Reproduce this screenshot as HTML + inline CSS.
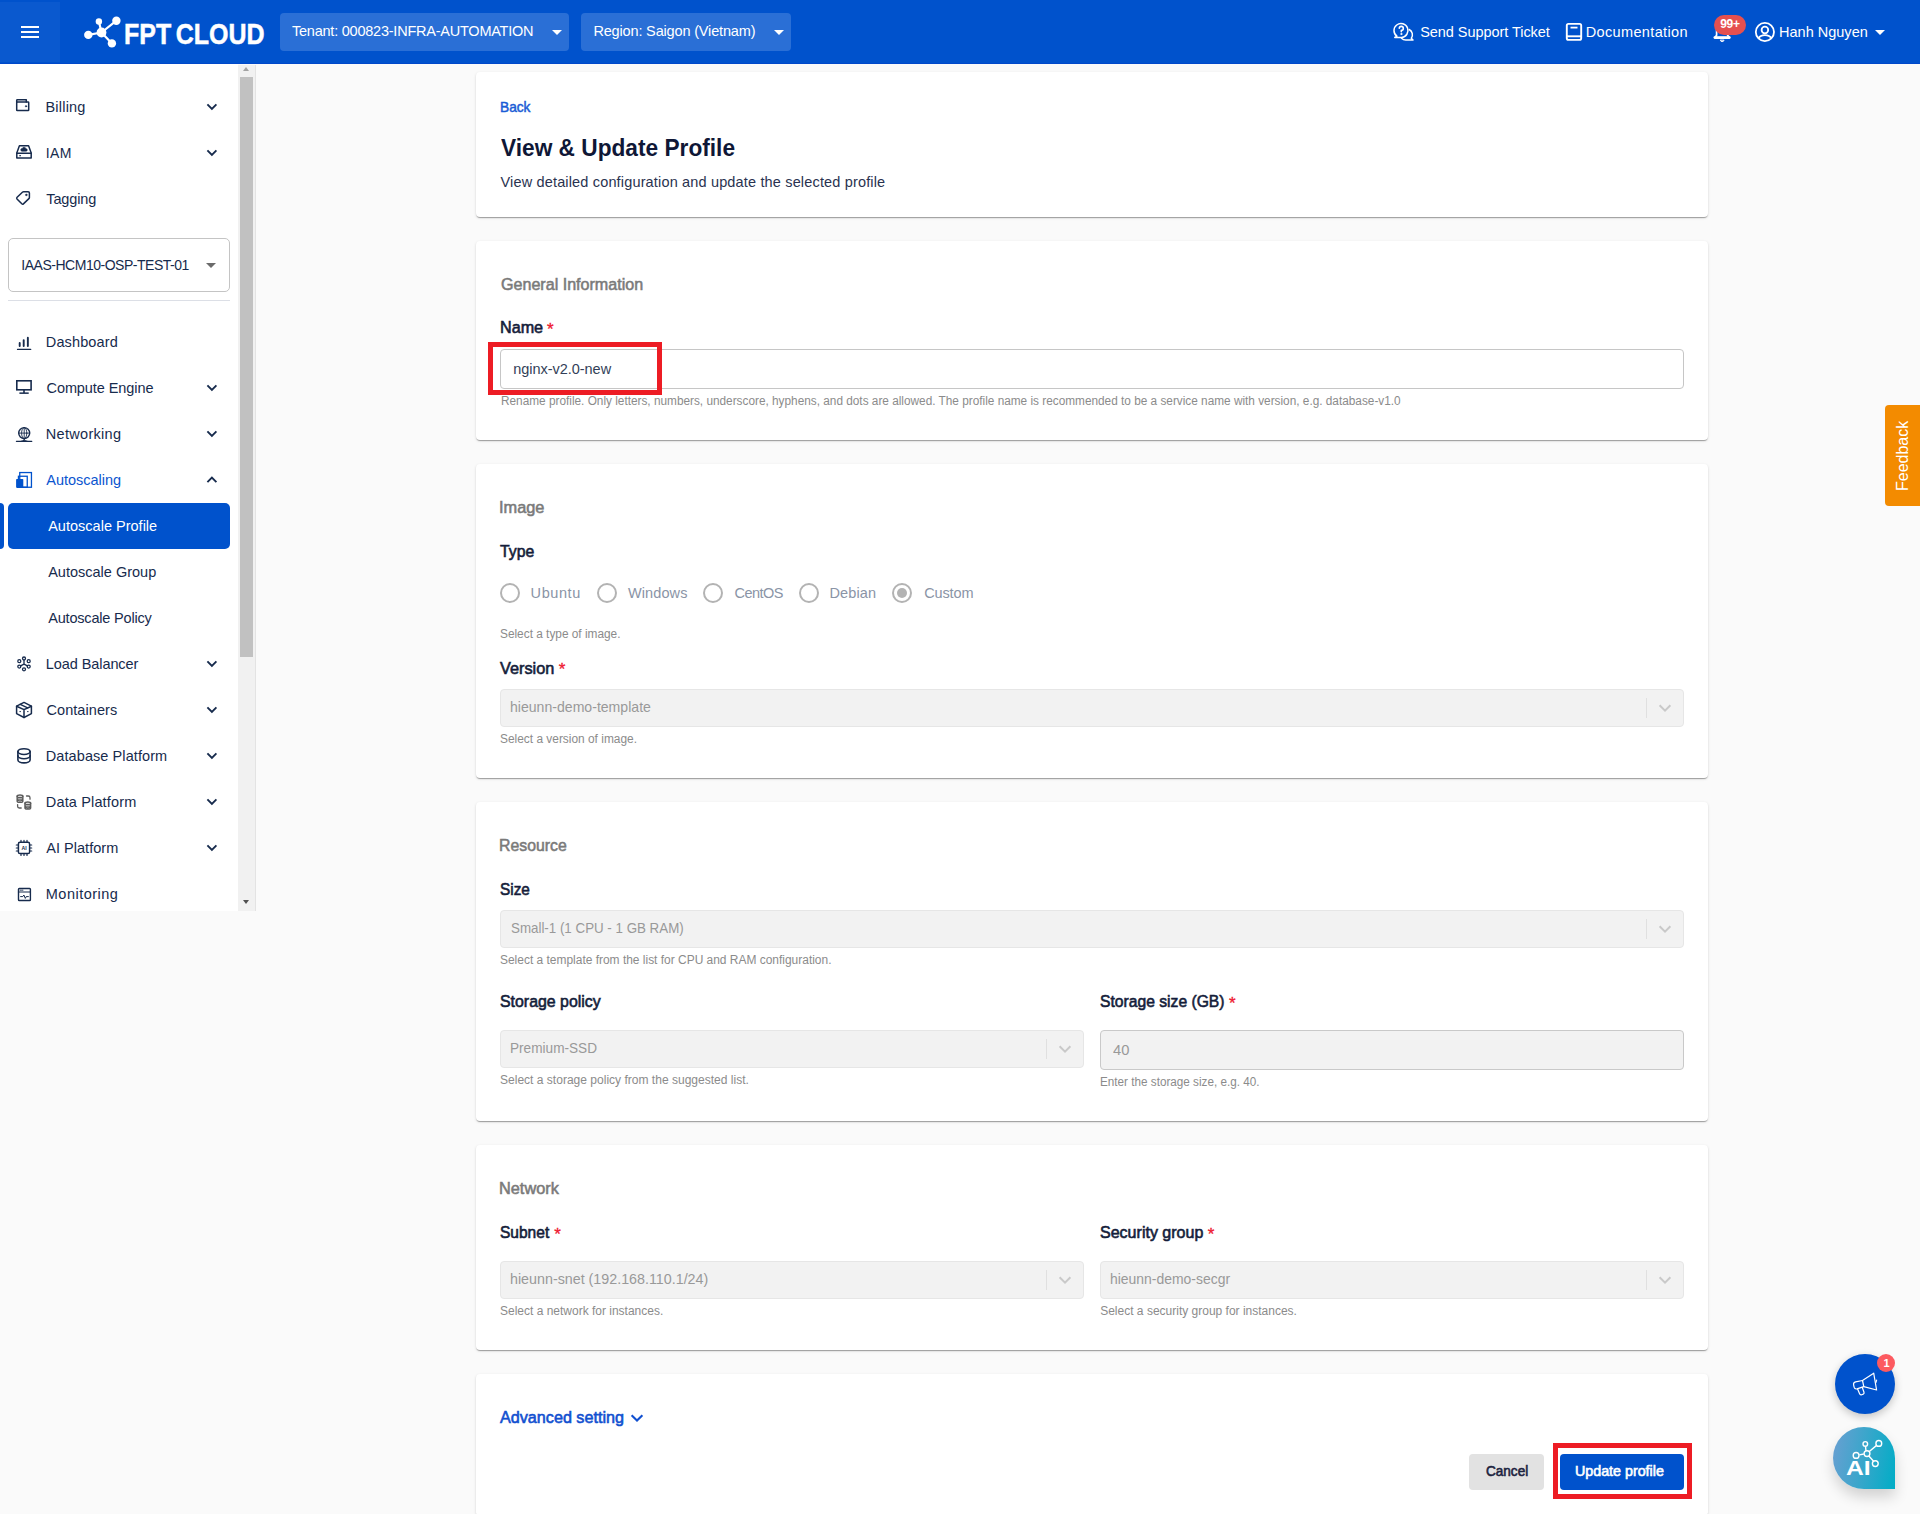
<!DOCTYPE html>
<html lang="en"><head>
<meta charset="utf-8">
<title>View &amp; Update Profile - FPT Cloud</title>
<style>
*{box-sizing:border-box;margin:0;padding:0}
html,body{width:1920px;height:1514px;overflow:hidden}
body{position:relative;background:#fafafa;font-family:"Liberation Sans",sans-serif;color:#172b4d}
.t{position:absolute;white-space:nowrap;line-height:1;display:block}
svg{position:absolute;overflow:visible}
/* header */
#hdr{position:absolute;left:0;top:0;width:1920px;height:64px;background:#0052cc;color:#fff;box-shadow:inset 0 -1px 0 #0048ca}
#burger{position:absolute;left:0;top:2px;width:60px;height:60px;background:#0a59cf}
#burger i{position:absolute;left:21px;width:18px;height:2px;background:#fff}
.hsel{position:absolute;top:13px;height:38px;background:#2a6fd6;border-radius:4px}
.ht{font-size:14.5px;color:#fff}
.caret{position:absolute;width:0;height:0;border-left:5px solid transparent;border-right:5px solid transparent;border-top:5px solid #fff}
#logo{font-size:30px;font-weight:bold;color:#fff;word-spacing:-3px;-webkit-text-stroke:0.5px #fff}
#badge{position:absolute;left:1714px;top:15px;width:32px;height:20px;border-radius:10px;background:#e5504f}
#badge .t{font-size:12px;font-weight:bold;color:#fff}
/* sidebar */
#side{position:absolute;left:0;top:64px;width:238px;height:847px;background:#fff}
#sbar{position:absolute;left:238px;top:65px;width:18px;height:846px;background:#f1f1f1;border-right:1px solid #e3e3e3}
#sbar .thumb{position:absolute;left:2px;top:12px;width:13px;height:580px;background:#c1c1c1}
#sbar .up,#sbar .dn{position:absolute;left:5px;width:0;height:0;border-left:3.5px solid transparent;border-right:3.5px solid transparent}
#sbar .up{top:2px;border-bottom:4px solid #a3a3a3}
#sbar .dn{bottom:7px;border-top:4px solid #505050}
.nl{font-size:14.5px;color:#172b4d}
#navsvg{fill:none;stroke:#172b4d;stroke-width:1.5;stroke-linecap:round;stroke-linejoin:round}
#navsvg .chev{stroke-width:1.9;stroke-linecap:butt;stroke-linejoin:miter}
#proj{position:absolute;left:8px;top:174px;width:222px;height:54px;border:1px solid #c4c4c4;border-radius:5px;background:#fff}
#projcaret{position:absolute;left:206px;top:199px;width:0;height:0;border-left:5px solid transparent;border-right:5px solid transparent;border-top:5px solid #6b6b6b}
#sdiv{position:absolute;left:8px;top:236px;width:222px;height:1px;background:#dcdfe6}
#act{position:absolute;left:8px;top:439px;width:222px;height:46px;background:#0052cc;border-radius:5px}
#actbar{position:absolute;left:0;top:439px;width:4px;height:46px;background:#0052cc;border-radius:0 4px 4px 0}

/* cards */
.card{position:absolute;left:476px;width:1232px;background:#fff;border-radius:4px;box-shadow:0 2px 1px -1px rgba(0,0,0,.2),0 1px 1px 0 rgba(0,0,0,.14),0 1px 3px 0 rgba(0,0,0,.12)}
.sec{font-size:16.4px;color:#7a7a7a;-webkit-text-stroke:0.55px #7a7a7a}
.lab{font-size:16.4px;color:#141d3a;-webkit-text-stroke:0.6px #141d3a}
.req{font-size:17px;color:#ee1830;-webkit-text-stroke:0.3px #ee1830}
.help{font-size:12px;color:#8b8b8b}
.dis{position:absolute;background:#f2f2f2;border:1px solid #e6e6e6;border-radius:4px}
.dis i{position:absolute;right:36px;top:8px;width:1px;height:20px;background:#e0e0e0}
.val{font-size:14.5px;color:#999}
.rad{position:absolute;width:20px;height:20px;border:2px solid #b3b3b3;border-radius:50%;background:#fff}
.rad.on::after{content:"";position:absolute;left:3px;top:3px;width:10px;height:10px;border-radius:50%;background:#b3b3b3}
.rl{font-size:14.5px;color:#8a94a6}
.mark{position:absolute;border:5px solid #ed1c24}
.btn{position:absolute;top:1454px;height:36px;border-radius:4px}
.bt{font-size:14.5px;-webkit-text-stroke:0.6px}
</style>
</head>
<body>

<!-- ================= HEADER ================= -->
<header id="hdr">
  <div id="burger"><i style="top:24px"></i><i style="top:29px"></i><i style="top:34px"></i></div>
  <svg id="logoicon" style="left:80px;top:12px" width="44" height="40" viewBox="80 12 44 40">
    <g stroke="#fff" stroke-width="2.2" stroke-linecap="round">
      <line x1="101.5" y1="32.5" x2="98.9" y2="21.5"></line><line x1="101.5" y1="32.5" x2="116.4" y2="20.7"></line>
      <line x1="101.5" y1="32.5" x2="88.3" y2="34.9"></line><line x1="101.5" y1="32.5" x2="111.9" y2="43.4"></line>
    </g>
    <g fill="#fff"><circle cx="101.5" cy="32.5" r="4.9"></circle><circle cx="98.9" cy="21.5" r="3.2"></circle><circle cx="116.4" cy="20.7" r="4.2"></circle><circle cx="88.3" cy="34.9" r="4.2"></circle><circle cx="111.9" cy="43.4" r="4.2"></circle></g>
  </svg>
  <span class="t" id="logo" style="left: 124.03px; top: 18.9px; transform-origin: 0px 0px; transform: scaleX(0.833);">FPT CLOUD</span>

  <div class="hsel" style="left:280px;width:289px"></div>
  <span class="t ht" style="letter-spacing: -0.23px; left: 292px; top: 24px;">Tenant: 000823-INFRA-AUTOMATION</span>
  <div class="caret" style="left:552px;top:30px"></div>
  <div class="hsel" style="left:581px;width:210px"></div>
  <span class="t ht" style="letter-spacing: -0.16px; left: 593.4px; top: 24px;">Region: Saigon (Vietnam)</span>
  <div class="caret" style="left:774px;top:30px"></div>

  <!-- support -->
  <svg style="left:1392px;top:21px" width="24" height="22" viewBox="1392 21 24 22" fill="none" stroke="#fff" stroke-width="1.5" stroke-linejoin="round" stroke-linecap="round">
    <path d="M1396.9 36.2 A7 7 0 1 1 1401.5 37.5 L1394.8 37.5 Z"></path>
    <path d="M1409.2 29.5 A6 6 0 0 1 1411.3 38.3 L1413 40 L1405.8 40 A6 6 0 0 1 1401.5 38.2"></path>
    <path d="M1399.3 28.3 A2 2 0 1 1 1401.3 30.4 L1401.3 31.7" stroke-width="1.6"></path>
    <circle cx="1401.3" cy="34" r="0.6" fill="#fff" stroke-width="0.9"></circle>
  </svg>
  <span class="t ht" style="letter-spacing: -0.05px; left: 1420.2px; top: 24.7px;">Send Support Ticket</span>
  <!-- doc -->
  <svg style="left:1565px;top:22px" width="18" height="20" viewBox="1565 22 18 20" fill="none" stroke="#fff" stroke-width="1.9" stroke-linejoin="round">
    <rect x="1566.8" y="23.9" width="14.4" height="16" rx="1.6"></rect>
    <line x1="1567" y1="36.3" x2="1581" y2="36.3"></line>
    <line x1="1570.5" y1="27.6" x2="1577.5" y2="27.6" stroke-width="1.8"></line>
  </svg>
  <span class="t ht" style="letter-spacing: 0.36px; left: 1585.7px; top: 24.7px;">Documentation</span>
  <!-- bell -->
  <svg style="left:1712px;top:20px" width="20" height="23" viewBox="1712 20 20 23" fill="none" stroke="#fff" stroke-width="1.7" stroke-linejoin="round" stroke-linecap="round">
    <path d="M1714.8 37.6 L1729.4 37.6 L1727.6 35.2 L1727.6 30 A5.5 5.5 0 0 0 1716.6 30 L1716.6 35.2 Z" fill="none"></path><path d="M1714.8 37.6 H1729.4" stroke-width="2.6"></path>
    <path d="M1720.3 40.4 A2 2 0 0 0 1724 40.4 Z" fill="#fff" stroke-width="0.8"></path>
  </svg>
  <div id="badge"></div>
  <span class="t" style="font-size: 12px; font-weight: bold; color: rgb(255, 255, 255); letter-spacing: -0.37px; left: 1720.3px; top: 18.4px;">99+</span>
  <!-- user -->
  <svg style="left:1754px;top:21px" width="22" height="22" viewBox="1754 21 22 22" fill="none" stroke="#fff" stroke-width="1.8">
    <circle cx="1764.9" cy="32" r="9.1"></circle>
    <circle cx="1764.9" cy="30" r="3.3"></circle>
    <path d="M1758.6 38.3 A6.6 4.4 0 0 1 1771.2 38.3"></path>
  </svg>
  <span class="t ht" style="letter-spacing: 0.01px; left: 1779px; top: 24.8px;">Hanh Nguyen</span>
  <div class="caret" style="left:1875px;top:30px"></div>
</header>

<!-- ================= SIDEBAR ================= -->
<nav>
<div id="side">
  <div id="proj"></div>
  <div id="projcaret"></div>
  <div id="sdiv"></div>
  <div id="act"></div><div id="actbar"></div>
</div>

<svg id="navsvg" style="left:0;top:64px" width="238" height="847" viewBox="0 64 238 847">
  <!-- billing / wallet -->
  <g><rect x="16.7" y="101.9" width="12" height="8.6" rx="0.6"></rect><path d="M16.7 102 V100.4 Q16.7 99.7 17.4 99.7 H26.3 V101.9"></path><circle cx="26" cy="106.3" r="0.7" fill="#172b4d" stroke-width="0.6"></circle></g>
  <!-- iam / drive -->
  <g><path d="M19.4 145.8 H28.6 L31.2 152.9 V158 H16.8 V152.9 Z"></path><path d="M16.8 153.3 H31.2"></path><path d="M21.6 151.2 a1.4 1.4 0 0 1 0.6 -2.7 a2 2 0 0 1 3.8 0.3 a1.2 1.2 0 0 1 0.2 2.4 Z" fill="#172b4d" stroke-width="0.5"></path><circle cx="20" cy="155.7" r="0.5" fill="#172b4d" stroke-width="0.5"></circle></g>
  <!-- tag -->
  <g><path d="M23.6 191.7 H28.2 Q29.4 191.7 29.4 192.9 V197.4 Q29.4 198.1 28.9 198.6 L23.4 203.9 Q22.6 204.6 21.8 203.8 L17 198.9 Q16.3 198.1 17.1 197.3 L22.4 192.2 Q22.9 191.7 23.6 191.7 Z"></path><circle cx="26.3" cy="194.9" r="0.8" fill="#172b4d" stroke-width="0.6"></circle></g>
  <!-- dashboard -->
  <g stroke-linecap="round"><path d="M19.7 343 V346.1 M23.7 340.1 V346.1 M27.85 337.7 V346.1" stroke-width="1.9"></path><path d="M17.5 349.4 H30.7" stroke-width="1.25"></path></g>
  <!-- compute / monitor -->
  <g stroke-linejoin="miter" stroke-linecap="butt"><rect x="16.8" y="380.8" width="14.3" height="9" stroke-width="1.6"></rect><path d="M24 390 V393" stroke-width="1.6"></path><path d="M19.4 393.15 H28.7" stroke-width="1.5"></path></g>
  <!-- networking / globe -->
  <g stroke-width="1.4"><circle cx="24.2" cy="433.1" r="5.5"></circle><ellipse cx="24.2" cy="433.1" rx="2.6" ry="5.5" stroke-width="0.9"></ellipse><path d="M18.7 433.1 H29.7 M24.2 427.6 V438.6" stroke-width="0.9"></path><path d="M16.4 441.3 H31.8" stroke-width="1.2"></path><path d="M24.2 438.6 V439.6 M21.2 441.3 Q24.2 441 24.2 439.2 Q24.2 441 27.2 441.3" stroke-width="1.1"></path></g>
  <!-- autoscaling -->
  <g stroke="#0052cc" stroke-linejoin="miter"><rect x="19.75" y="472.55" width="11.7" height="14.7" stroke-width="1.3"></rect><rect x="18.45" y="476.25" width="8.8" height="11" stroke-width="1.3"></rect><rect x="16.1" y="479" width="7.2" height="8.9" rx="0.8" fill="#0052cc" stroke="none"></rect></g>
  <!-- load balancer -->
  <g stroke-width="1.3"><circle cx="24" cy="658.5" r="1.5"></circle><circle cx="19.3" cy="661.2" r="1.5"></circle><circle cx="28.7" cy="661.2" r="1.5"></circle><circle cx="19.3" cy="666.6" r="1.5"></circle><circle cx="28.7" cy="666.6" r="1.5"></circle><circle cx="24" cy="669.3" r="1.5"></circle><path d="M24 660 V664.2 L20.6 665.9 M24 664.2 L27.4 665.9"></path></g>
  <!-- containers / box -->
  <g stroke-width="1.5"><path d="M24 702.4 L31.4 706.2 V713.6 L24 717.5 L16.6 713.6 V706.2 Z"></path><path d="M16.6 706.2 L24 709.6 L31.4 706.2 M24 709.6 V717.5"></path><path d="M20.2 704.3 L27.7 707.9" stroke-width="1.3"></path><path d="M19.8 711.6 h0.8 M27.4 711.6 h0.8" stroke-width="0.9"></path></g>
  <!-- database -->
  <g stroke-width="1.6"><ellipse cx="24" cy="751.6" rx="6.1" ry="2.9"></ellipse><path d="M17.9 751.6 V760 A6.1 2.9 0 0 0 30.1 760 V751.6"></path><path d="M17.9 755.8 A6.1 2.9 0 0 0 30.1 755.8"></path></g>
  <!-- data platform -->
  <g stroke="#5c5c5c" stroke-width="1.3"><ellipse cx="20" cy="796.2" rx="2.9" ry="1.2"></ellipse><path d="M17.1 796.2 V801.2 A2.9 1.2 0 0 0 22.9 801.2 V796.2 M17.1 798 A2.9 1.2 0 0 0 22.9 798 M17.1 799.6 A2.9 1.2 0 0 0 22.9 799.6"></path><ellipse cx="27.8" cy="803.2" rx="2.9" ry="1.2"></ellipse><path d="M24.9 803.2 V808 A2.9 1.2 0 0 0 30.7 808 V803.2 M24.9 805 A2.9 1.2 0 0 0 30.7 805 M24.9 806.6 A2.9 1.2 0 0 0 30.7 806.6"></path><path d="M26.5 796 H28.3 Q30 796 30 797.7 V799.2"></path><path d="M17.6 804.6 V806.3 Q17.6 808 19.3 808 H21.2"></path></g>
  <!-- ai platform / chip -->
  <g stroke-width="1.5"><rect x="18.4" y="842.3" width="11.2" height="11.2" rx="1.6"></rect><path d="M21 840.3 V842 M24 840.3 V842 M27 840.3 V842 M21 853.8 V855.5 M24 853.8 V855.5 M27 853.8 V855.5 M16.3 845 H18 M16.3 848 H18 M16.3 851 H18 M30 845 H31.7 M30 848 H31.7 M30 851 H31.7" stroke-width="1.2"></path></g>
  <text x="24" y="849.9" text-anchor="middle" font-family="Liberation Sans, sans-serif" font-size="5.2" font-weight="bold" fill="#172b4d" stroke="none">AI</text>
  <!-- monitoring -->
  <g stroke-width="1.4"><rect x="18.5" y="888.5" width="11.9" height="12" rx="0.8"></rect><path d="M18.5 892 H30.4" stroke-width="1.2"></path><path d="M20 890.2 h3" stroke-width="0.8" stroke-dasharray="0.6 0.6"></path><path d="M20.6 896.6 H22.8 L23.9 895 L25.3 898.4 L26.2 896.6 H28.4" stroke-width="1"></path></g>
  <!-- chevrons -->
  <polyline class="chev" points="207.4,104.4 211.9,108.9 216.4,104.4"></polyline><polyline class="chev" points="207.4,150.4 211.9,154.9 216.4,150.4"></polyline><polyline class="chev" points="207.4,385.4 211.9,389.9 216.4,385.4"></polyline><polyline class="chev" points="207.4,431.4 211.9,435.9 216.4,431.4"></polyline><polyline class="chev" points="207.4,482.1 211.9,477.6 216.4,482.1"></polyline><polyline class="chev" points="207.4,661.4 211.9,665.9 216.4,661.4"></polyline><polyline class="chev" points="207.4,707.4 211.9,711.9 216.4,707.4"></polyline><polyline class="chev" points="207.4,753.4 211.9,757.9 216.4,753.4"></polyline><polyline class="chev" points="207.4,799.4 211.9,803.9 216.4,799.4"></polyline><polyline class="chev" points="207.4,845.4 211.9,849.9 216.4,845.4"></polyline>
</svg>
<div id="sbar"><div class="up"></div><div class="thumb"></div><div class="dn"></div></div>

<span class="t nl" style="letter-spacing: 0.2px; left: 45.5px; top: 100px;">Billing</span>
<span class="t nl" style="font-size: 14px; letter-spacing: 0.34px; left: 45.8px; top: 146px;">IAM</span>
<span class="t nl" style="letter-spacing: -0.14px; left: 46.3px; top: 192px;">Tagging</span>
<span class="t nl" style="font-size: 14px; letter-spacing: -0.48px; left: 21.3px; top: 258px;">IAAS-HCM10-OSP-TEST-01</span>
<span class="t nl" style="letter-spacing: 0.13px; left: 45.8px; top: 335px;">Dashboard</span>
<span class="t nl" style="letter-spacing: -0.08px; left: 46.5px; top: 381px;">Compute Engine</span>
<span class="t nl" style="letter-spacing: 0.3px; left: 45.8px; top: 427px;">Networking</span>
<span class="t nl" style="color: rgb(11, 85, 207); letter-spacing: -0.02px; left: 46.3px; top: 473px;">Autoscaling</span>
<span class="t nl" style="color: rgb(255, 255, 255); letter-spacing: 0.01px; left: 48.2px; top: 519px;">Autoscale Profile</span>
<span class="t nl" style="letter-spacing: 0px; left: 48.2px; top: 565px;">Autoscale Group</span>
<span class="t nl" style="letter-spacing: -0.18px; left: 48.2px; top: 611px;">Autoscale Policy</span>
<span class="t nl" style="letter-spacing: -0.08px; left: 45.8px; top: 657px;">Load Balancer</span>
<span class="t nl" style="letter-spacing: 0.06px; left: 46.5px; top: 703px;">Containers</span>
<span class="t nl" style="letter-spacing: 0.08px; left: 45.8px; top: 749px;">Database Platform</span>
<span class="t nl" style="letter-spacing: 0.15px; left: 45.8px; top: 795px;">Data Platform</span>
<span class="t nl" style="letter-spacing: 0.02px; left: 46.3px; top: 841px;">AI Platform</span>
<span class="t nl" style="letter-spacing: 0.48px; left: 45.8px; top: 887px;">Monitoring</span>


</nav>
<!-- ================= MAIN ================= -->
<main>
<div class="card" style="top:72px;height:144.6px"></div>
<span class="t" style="font-size: 14.5px; color: rgb(26, 92, 214); -webkit-text-stroke: 0.5px rgb(26, 92, 214); left: 499.56px; top: 100.2px; transform-origin: 0px 0px; transform: scaleX(0.944);">Back</span>
<span class="t ttl" style="font-size: 24px; font-weight: bold; color: rgb(15, 23, 54); left: 500.5px; top: 135.8px; transform-origin: 0px 0px; transform: scaleX(0.945);">View &amp; Update Profile</span>
<span class="t" style="font-size: 14.5px; color: rgb(42, 51, 80); letter-spacing: 0.16px; left: 500.5px; top: 175px;">View detailed configuration and update the selected profile</span>

<div class="card" style="top:241px;height:198.6px"></div>
<span class="t sec" style="left: 500.5px; top: 276px; transform-origin: 0px 0px; transform: scaleX(0.981);">General Information</span>
<span class="t lab" style="left: 499.51px; top: 319.3px; transform-origin: 0px 0px; transform: scaleX(0.986);">Name</span><span class="t req" style="left: 547px; top: 320.7px;">*</span>
<div class="dis" style="left:500px;top:349.2px;width:1184px;height:39.5px;background:#fff;border-color:#c6c6c6"></div>
<span class="t" style="font-size: 14.5px; color: rgb(51, 63, 88); letter-spacing: -0.04px; left: 513.3px; top: 361.8px;">nginx-v2.0-new</span>
<div class="mark" style="left:488.1px;top:342.3px;width:173.9px;height:52.6px"></div>
<span class="t help" style="left: 500.5px; top: 394.5px; transform-origin: 0px 0px; transform: scaleX(0.984);">Rename profile. Only letters, numbers, underscore, hyphens, and dots are allowed. The profile name is recommended to be a service name with version, e.g. database-v1.0</span>

<div class="card" style="top:464px;height:313.6px"></div>
<span class="t sec" style="left: 499.4px; top: 498.7px; transform-origin: 0px 0px; transform: scaleX(0.997);">Image</span>
<span class="t lab" style="left: 500.4px; top: 542.6px; transform-origin: 0px 0px; transform: scaleX(0.963);">Type</span>
<div class="rad" style="left:500px;top:583px"></div><span class="t rl" style="letter-spacing: 0.58px; left: 530.6px; top: 586px;">Ubuntu</span>
<div class="rad" style="left:597px;top:583px"></div><span class="t rl" style="letter-spacing: 0.12px; left: 627.9px; top: 586px;">Windows</span>
<div class="rad" style="left:703px;top:583px"></div><span class="t rl" style="letter-spacing: -0.56px; left: 734.6px; top: 586px;">CentOS</span>
<div class="rad" style="left:799px;top:583px"></div><span class="t rl" style="letter-spacing: 0.1px; left: 829.5px; top: 586px;">Debian</span>
<div class="rad on" style="left:892px;top:583px"></div><span class="t rl" style="letter-spacing: -0.12px; left: 924.2px; top: 586px;">Custom</span>
<span class="t help" style="left: 500.4px; top: 628px; transform-origin: 0px 0px; transform: scaleX(0.987);">Select a type of image.</span>
<span class="t lab" style="left: 500.4px; top: 660px; transform-origin: 0px 0px; transform: scaleX(0.992);">Version</span><span class="t req" style="left: 558.8px; top: 661.4px;">*</span>
<div class="dis" style="left:500px;top:689px;width:1184px;height:38px"><i></i></div><svg style="left:1658px;top:702.7px" width="14" height="10" viewBox="0 0 14 10" fill="none" stroke="#c9c9c9" stroke-width="2"><polyline points="1.6,2.2 7,7.6 12.4,2.2"></polyline></svg>
<span class="t val" style="left: 510.23px; top: 700px; transform-origin: 0px 0px; transform: scaleX(0.971);">hieunn-demo-template</span>
<span class="t help" style="left: 500.4px; top: 732.8px; transform-origin: 0px 0px; transform: scaleX(0.992);">Select a version of image.</span>

<div class="card" style="top:802px;height:318.6px"></div>
<span class="t sec" style="left: 499.44px; top: 837px; transform-origin: 0px 0px; transform: scaleX(0.965);">Resource</span>
<span class="t lab" style="left: 500.4px; top: 880.8px; transform-origin: 0px 0px; transform: scaleX(0.935);">Size</span>
<div class="dis" style="left:500px;top:910px;width:1184px;height:38px"><i></i></div><svg style="left:1658px;top:923.7px" width="14" height="10" viewBox="0 0 14 10" fill="none" stroke="#c9c9c9" stroke-width="2"><polyline points="1.6,2.2 7,7.6 12.4,2.2"></polyline></svg>
<span class="t val" style="left: 511.2px; top: 921px; transform-origin: 0px 0px; transform: scaleX(0.92);">Small-1 (1 CPU - 1 GB RAM)</span>
<span class="t help" style="left: 500.4px; top: 953.8px; transform-origin: 0px 0px; transform: scaleX(0.996);">Select a template from the list for CPU and RAM configuration.</span>
<span class="t lab" style="left: 500.4px; top: 993px; transform-origin: 0px 0px; transform: scaleX(0.97);">Storage policy</span>
<div class="dis" style="left:500px;top:1030px;width:584px;height:38px"><i></i></div><svg style="left:1058px;top:1043.7px" width="14" height="10" viewBox="0 0 14 10" fill="none" stroke="#c9c9c9" stroke-width="2"><polyline points="1.6,2.2 7,7.6 12.4,2.2"></polyline></svg>
<span class="t val" style="left: 510.26px; top: 1040.6px; transform-origin: 0px 0px; transform: scaleX(0.939);">Premium-SSD</span>
<span class="t help" style="left: 500.4px; top: 1074.2px; transform-origin: 0px 0px; transform: scaleX(1.003);">Select a storage policy from the suggested list.</span>
<span class="t lab" style="left: 1100.2px; top: 993.2px; transform-origin: 0px 0px; transform: scaleX(0.956);">Storage size (GB)</span><span class="t req" style="left: 1229px; top: 994.6px;">*</span>
<div class="dis" style="left:1100px;top:1030px;width:584px;height:40px;border-color:#c9c9c9"></div>
<span class="t val" style="font-size: 14px; left: 1112.7px; top: 1043px; transform-origin: 0px 0px; transform: scaleX(1.052);">40</span>
<span class="t help" style="left: 1100.2px; top: 1076px; transform-origin: 0px 0px; transform: scaleX(0.976);">Enter the storage size, e.g. 40.</span>

<div class="card" style="top:1145px;height:204.6px"></div>
<span class="t sec" style="left: 499.41px; top: 1180.3px; transform-origin: 0px 0px; transform: scaleX(0.995);">Network</span>
<span class="t lab" style="left: 500.4px; top: 1224.3px; transform-origin: 0px 0px; transform: scaleX(0.947);">Subnet</span><span class="t req" style="left: 554.3px; top: 1225.7px;">*</span>
<div class="dis" style="left:500px;top:1261px;width:584px;height:38px"><i></i></div><svg style="left:1058px;top:1274.7px" width="14" height="10" viewBox="0 0 14 10" fill="none" stroke="#c9c9c9" stroke-width="2"><polyline points="1.6,2.2 7,7.6 12.4,2.2"></polyline></svg>
<span class="t val" style="left: 510.22px; top: 1272.3px; transform-origin: 0px 0px; transform: scaleX(0.985);">hieunn-snet (192.168.110.1/24)</span>
<span class="t help" style="left: 500.4px; top: 1305px; transform-origin: 0px 0px; transform: scaleX(0.999);">Select a network for instances.</span>
<span class="t lab" style="left: 1100.2px; top: 1224.4px; transform-origin: 0px 0px; transform: scaleX(0.978);">Security group</span><span class="t req" style="left: 1207.8px; top: 1225.8px;">*</span>
<div class="dis" style="left:1100px;top:1261px;width:584px;height:38px"><i></i></div><svg style="left:1658px;top:1274.7px" width="14" height="10" viewBox="0 0 14 10" fill="none" stroke="#c9c9c9" stroke-width="2"><polyline points="1.6,2.2 7,7.6 12.4,2.2"></polyline></svg>
<span class="t val" style="left: 1110.24px; top: 1272.3px; transform-origin: 0px 0px; transform: scaleX(0.961);">hieunn-demo-secgr</span>
<span class="t help" style="left: 1100.2px; top: 1304.5px; transform-origin: 0px 0px; transform: scaleX(1);">Select a security group for instances.</span>

<div class="card" style="top:1374px;height:141.6px"></div>
<span class="t lab" style="color: rgb(17, 80, 208); -webkit-text-stroke: 0.6px rgb(17, 80, 208); left: 500.4px; top: 1409.3px; transform-origin: 0px 0px; transform: scaleX(0.986);">Advanced setting</span><svg style="left:629.6px;top:1413.1px" width="14" height="10" viewBox="0 0 14 10" fill="none" stroke="#1150d0" stroke-width="2.1"><polyline points="1.6,2.2 7,7.6 12.4,2.2"></polyline></svg>
<div class="btn" style="left:1469px;width:75px;background:#e2e2e2"></div>
<span class="t bt" style="color: rgb(28, 35, 64); left: 1485.6px; top: 1464.2px; transform-origin: 0px 0px; transform: scaleX(0.935);">Cancel</span>
<div class="btn" style="left:1560px;width:124px;background:#0052cc"></div>
<span class="t bt" style="color: rgb(255, 255, 255); left: 1575.22px; top: 1464.2px; transform-origin: 0px 0px; transform: scaleX(0.984);">Update profile</span>
<div class="mark" style="left:1553.1px;top:1443.25px;width:138.8px;height:55.25px"></div>

</main>
<!-- feedback tab -->
<div style="position:absolute;left:1884.5px;top:405px;width:36px;height:101px;background:#f38b00;border-radius:4px 0 0 4px"></div>
<span class="t" id="fb" style="font-size:16px;color:#fff;left:1894.6px;top:490.8px;transform-origin:0 0;transform:rotate(-90deg)">Feedback</span>

<!-- floating buttons -->
<div style="position:absolute;left:1835px;top:1353.7px;width:60px;height:60px;border-radius:50%;background:#0052cc;box-shadow:0 3px 8px rgba(0,0,0,.22)"></div>
<svg style="left:1850px;top:1370px" width="30" height="28" viewBox="1850 1370 30 28" fill="none" stroke="#fff" stroke-width="1.2" stroke-linejoin="round" stroke-linecap="round">
  <path d="M1862.5 1380.5 L1873.7 1373.2 L1876.6 1390 L1863.8 1386.6 Z"></path>
  <path d="M1862.5 1380.5 L1855.6 1381.9 Q1853.2 1382.5 1853.6 1384.8 L1854.1 1387.2 Q1854.7 1389.4 1857 1388.9 L1863.8 1386.6"></path>
  <path d="M1857.6 1388.9 L1859.6 1393.8 Q1860.2 1395.2 1861.7 1394.7 L1863.2 1394.1 Q1864.5 1393.5 1864 1392.2 L1862.2 1387.3"></path>
  <path d="M1876 1382.3 L1876.6 1380.2"></path>
</svg>
<div style="position:absolute;left:1877px;top:1354px;width:18px;height:18px;border-radius:50%;background:#fc5a60"></div>
<span class="t" style="font-size: 11px; font-weight: bold; color: rgb(255, 255, 255); left: 1883.5px; top: 1358px;">1</span>

<div style="position:absolute;left:1833px;top:1427px;width:62px;height:62px;border-radius:31px 31px 0 31px;background:linear-gradient(100deg,#6b9fd2 0%,#3aa6cb 48%,#00adc6 100%);box-shadow:0 8px 14px rgba(0,0,0,.16)"></div>
<svg style="left:1840px;top:1436px" width="48" height="46" viewBox="1840 1436 48 46" fill="none" stroke="#fff" stroke-width="1.4">
  <path d="M1866 1451 L1865.5 1446.4 M1869.3 1451.5 L1876.6 1445.4 M1863.8 1454 L1859.4 1454.9 M1868.9 1456 L1873.6 1461.3"></path>
  <circle cx="1867" cy="1453.6" r="2.9"></circle><circle cx="1865.3" cy="1443.9" r="2.3"></circle><circle cx="1878.8" cy="1443.4" r="2.9"></circle><circle cx="1856.1" cy="1455.4" r="2.9"></circle><circle cx="1875.3" cy="1463.6" r="2.9"></circle>
</svg>
<span class="t" id="ai" style="font-size: 20.6px; font-weight: bold; color: rgb(255, 255, 255); left: 1846px; top: 1458.1px; transform-origin: 0px 0px; transform: scaleX(1.198);">AI</span>



</body></html>
